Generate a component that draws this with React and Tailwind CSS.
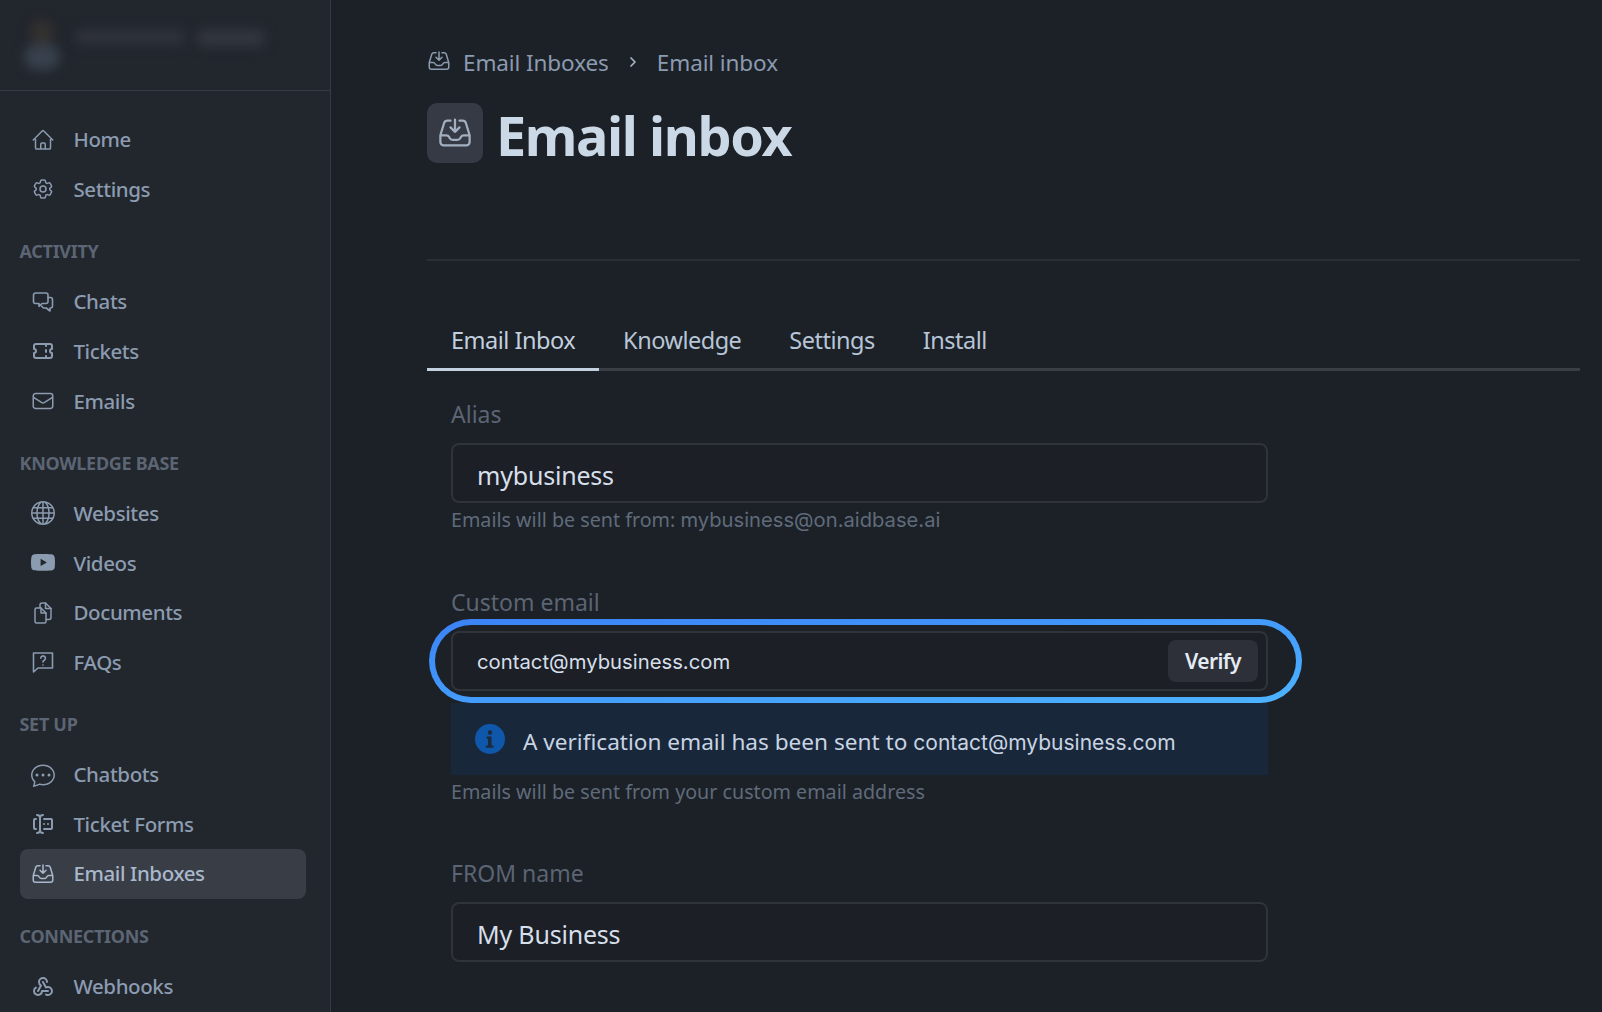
import { ChevronRight } from 'lucide-react';
import { HiOutlineHome, HiOutlineCog6Tooth, HiOutlineEnvelope, HiOutlineInboxArrowDown } from 'react-icons/hi2';
import { TbTicket, TbForms, TbWebhook } from 'react-icons/tb';
import { BsGlobe, BsChatDots, BsYoutube } from 'react-icons/bs';

const ChatsIcon = ({ className }) => (
  <svg className={className} viewBox="0 0 24 24" fill="none" stroke="currentColor" strokeWidth="1.6" strokeLinejoin="round" strokeLinecap="round">
    <path d="M4.500 3h10.500a2 2 0 0 1 2 2v6.500a2 2 0 0 1-2 2h-4l-3 2.800v-2.800H4.500a2 2 0 0 1-2-2V5a2 2 0 0 1 2-2z" />
    <path d="M17 7.500h2.500a2 2 0 0 1 2 2v6.500a2 2 0 0 1-2 2H19v3l-3.800-3h-2.700l-2-2" />
  </svg>
);

const DocumentsIcon = ({ className }) => (
  <svg className={className} viewBox="0 0 24 24" fill="none" stroke="currentColor" strokeWidth="1.5" strokeLinejoin="round" strokeLinecap="round">
    <path d="M9 6.800V4a2 2 0 0 1 2-2h3.500l5.500 5.500v9a2 2 0 0 1-2 2h-2.500" />
    <path d="M14.500 2v5.500H20" />
    <path d="M10 7H5.500A1.500 1.500 0 0 0 4 8.500v12A1.500 1.500 0 0 0 5.500 22h8a1.500 1.500 0 0 0 1.500-1.500V12z" />
    <path d="M10 7v5h5" />
  </svg>
);

const FaqsIcon = ({ className }) => (
  <svg className={className} viewBox="0 0 24 24" fill="none" stroke="currentColor" strokeWidth="1.6" strokeLinejoin="round" strokeLinecap="round">
    <path d="M2.500 3h19v15H7l-4.500 4z" />
    <path d="M9.800 8.200a2.300 2.300 0 1 1 3.500 2c-.9.500-1.300 1-1.300 1.900" />
    <path d="M12 15v.1" />
  </svg>
);

const SECTIONS = [
  {
    items: [
      { name: 'Home', icon: HiOutlineHome },
      { name: 'Settings', icon: HiOutlineCog6Tooth },
    ],
  },
  {
    title: 'ACTIVITY',
    items: [
      { name: 'Chats', icon: ChatsIcon },
      { name: 'Tickets', icon: TbTicket },
      { name: 'Emails', icon: HiOutlineEnvelope },
    ],
  },
  {
    title: 'KNOWLEDGE BASE',
    items: [
      { name: 'Websites', icon: BsGlobe },
      { name: 'Videos', icon: BsYoutube },
      { name: 'Documents', icon: DocumentsIcon },
      { name: 'FAQs', icon: FaqsIcon },
    ],
  },
  {
    title: 'SET UP',
    items: [
      { name: 'Chatbots', icon: BsChatDots },
      { name: 'Ticket Forms', icon: TbForms },
      { name: 'Email Inboxes', icon: HiOutlineInboxArrowDown, active: true },
    ],
  },
  {
    title: 'CONNECTIONS',
    items: [{ name: 'Webhooks', icon: TbWebhook }],
  },
];

const TABS = ['Email Inbox', 'Knowledge', 'Settings', 'Install'];

const Sidebar = () => (
  <aside className="w-[331px] h-full shrink-0 bg-[#22262d] border-r border-[#363a42] overflow-hidden">
    {/* Blurred account header */}
    <div className="h-[91px] border-b border-[#363a42] flex items-center pl-[22px] gap-[14px] overflow-hidden">
      <div className="w-[40px] h-[50px] flex flex-col items-center blur-[6px]">
        <div className="w-[22px] h-[24px] rounded-full bg-[#35322f]" />
        <div className="w-[36px] h-[26px] rounded-full bg-[#38414d]" />
      </div>
      <div className="flex gap-[14px] -mt-[14px] blur-[6px]">
        <div className="w-[108px] h-[14px] bg-[#30343b]" />
        <div className="w-[66px] h-[16px] bg-[#33373e]" />
      </div>
    </div>

    <nav className="pl-[20px] pr-[24px] pt-[24px]">
      {SECTIONS.map((section) => (
        <div key={section.title || 'top'}>
          {section.title && (
            <div className="h-[20px] mt-[27.800px] mb-[15px] -ml-[0.500px] flex items-center text-[18px] font-bold tracking-[-0.3px] text-[#5b6573]">
              {section.title}
            </div>
          )}
          {section.items.map((item) => {
            const Icon = item.icon;
            return (
              <div
                key={item.name}
                className={`h-[49.6px] flex items-center rounded-[8px] text-[20.5px] font-medium tracking-[-0.4px] ${
                  item.active ? 'bg-[#383d46] text-[#a9b8cc]' : 'text-[#8b9bb0]'
                }`}
              >
                <div className="w-[53.500px] pl-[11px] shrink-0">
                  <Icon className="w-[24px] h-[24px]" />
                </div>
                {item.name}
              </div>
            );
          })}
        </div>
      ))}
    </nav>
  </aside>
);

const Field = ({ label, value, hint }) => (
  <div>
    <div className="h-[28px] flex items-center text-[23px] text-[#5b6573]">{label}</div>
    <div className="mt-[15px] h-[60px] flex items-center pl-[24px] pr-[25px] pt-[5px] rounded-[8px] border-2 border-[#2f333a] bg-[#1c1f26] text-[25px] tracking-[-0.2px] text-[#d6dfea]">
      {value}
    </div>
    {hint && <div className="mt-[4px] h-[26px] flex items-center text-[19.7px] text-[#5f6b7a]">{hint}</div>}
  </div>
);

export default function App() {
  return (
    <div className="h-[1012px] w-full flex overflow-hidden bg-[#1c2027] font-['Noto_Sans','Open_Sans',sans-serif]">
      <Sidebar />

      <main className="flex-1 pl-[96px] pr-[22px] min-w-0">
        {/* Breadcrumb */}
        <div className="mt-[49px] h-[28px] flex items-center text-[22.5px] tracking-[-0.1px] text-[#8b9bb0]">
          <HiOutlineInboxArrowDown className="w-[24px] h-[24px] -mt-[4px]" />
          <span className="ml-[12px]">Email Inboxes</span>
          <ChevronRight className="w-[16px] h-[16px] mx-[16px] -mt-[2px] text-[#aab6c6]" strokeWidth={2.5} />
          <span>Email inbox</span>
        </div>

        {/* Title */}
        <div className="mt-[26px] flex items-center gap-[13px] h-[60px]">
          <div className="w-[56px] h-[60px] rounded-[10px] bg-[#353a44] flex items-center justify-center text-[#a3afbf]">
            <HiOutlineInboxArrowDown className="w-[36px] h-[36px]" />
          </div>
          <h1 className="text-[54px] font-bold tracking-[-1.4px] text-[#cbd8e6] leading-none mt-[4px]">Email inbox</h1>
        </div>

        <div className="mt-[96px] border-t-2 border-[#2a2e35]" />

        {/* Tabs */}
        <div className="mt-[57px] flex border-b-[3px] border-[#3a3e45] h-[53px]">
          {TABS.map((tab, i) => (
            <div
              key={tab}
              className={`px-[24px] h-[53px] pb-[5px] flex items-center text-[23.5px] tracking-[-0.5px] border-b-[3px] ${
                i === 0 ? 'text-[#c3d0df] border-[#c3d0df]' : 'text-[#b7c5d6] border-transparent'
              }`}
            >
              {tab}
            </div>
          ))}
        </div>

        {/* Form */}
        <div className="w-[817px] ml-[24px] mt-[29px]">
          <Field
            label="Alias"
            value="mybusiness"
            hint={
              <span>
                Emails will be sent from: <span className="font-['Inter',sans-serif] text-[20.2px]">mybusiness@on.aidbase.ai</span>
              </span>
            }
          />

          <div className="mt-[55px] h-[28px] flex items-center text-[23px] text-[#5b6573]">Custom email</div>
          <div className="relative mt-[15px]">
            {/* Highlight ring drawn around the input */}
            <div className="absolute -left-[22px] -right-[34px] -top-[12px] -bottom-[12px] rounded-[42px] bg-linear-to-br from-[#3b82f6] to-[#4db3ff] p-[6px]">
              <div className="h-full rounded-[36px] bg-[#1c2027]" />
            </div>
            <div className="relative h-[60px] flex items-center justify-between pl-[24px] pr-[8px] rounded-[8px] border-2 border-[#2f333a] bg-[#1c1f26]">
              <span className="mt-[2px] font-['Inter',sans-serif] text-[20.3px] text-[#d6dfea]">contact@mybusiness.com</span>
              <button className="w-[90px] h-[42px] pt-[2px] rounded-[8px] bg-[#2d3038] text-[21px] font-semibold tracking-[-0.6px] text-[#e5ebf2]">
                Verify
              </button>
            </div>
          </div>

          {/* Verification notice */}
          <div className="mt-[12px] h-[72px] pt-[6px] bg-[#19273a] flex items-center pl-[24px]">
            <svg className="w-[30px] h-[30px] shrink-0 -mt-[6px]" viewBox="0 0 30 30">
              <circle cx="15" cy="15" r="15" fill="#0f57ab" />
              <circle cx="15" cy="8.500" r="2.200" fill="#1d2a3b" />
              <path d="M11.500 12.500h5v9h2v2.200h-7.500v-2.200h2v-6.800h-1.500z" fill="#1d2a3b" />
            </svg>
            <span className="ml-[18px] text-[22.6px] text-[#c8d4e3]">A verification email has been sent to</span>
            <span className="ml-[6px] mt-[2px] font-['Inter',sans-serif] text-[21px] text-[#c8d4e3]">contact@mybusiness.com</span>
          </div>

          <div className="mt-[4px] h-[26px] flex items-center text-[19.7px] text-[#5f6b7a]">
            Emails will be sent from your custom email address
          </div>

          <div className="mt-[54px]">
            <Field label="FROM name" value="My Business" />
          </div>
        </div>
      </main>
    </div>
  );
}
